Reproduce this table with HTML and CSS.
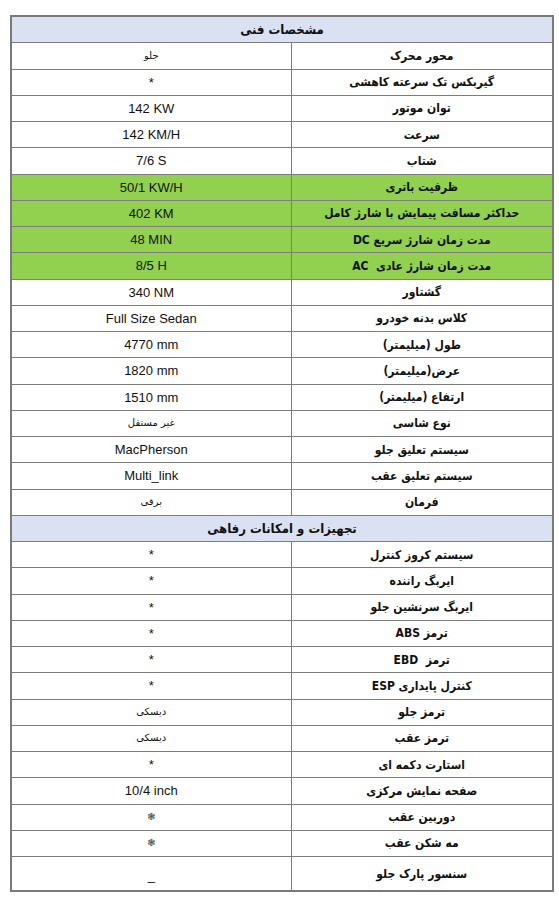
FILE: index.html
```html
<!DOCTYPE html>
<html lang="fa" dir="rtl">
<head>
<meta charset="utf-8">
<title>مشخصات فنی</title>
<link rel="stylesheet" href="styles.css">
</head>
<body>
<table class="spec">
  <colgroup><col class="c-label"><col class="c-value"></colgroup>
  <tbody>
    <tr class="head"><td colspan="2">مشخصات فنی</td></tr>
    <tr><td class="lbl">محور محرک</td><td class="val fa">جلو</td></tr>
    <tr><td class="lbl">گیربکس تک سرعته کاهشی</td><td class="val">*</td></tr>
    <tr><td class="lbl">توان موتور</td><td class="val">142 KW</td></tr>
    <tr><td class="lbl">سرعت</td><td class="val">142 KM/H</td></tr>
    <tr><td class="lbl">شتاب</td><td class="val">7/6 S</td></tr>
    <tr class="green"><td class="lbl">ظرفیت باتری</td><td class="val">50/1 KW/H</td></tr>
    <tr class="green"><td class="lbl">حداکثر مسافت پیمایش با شارژ کامل</td><td class="val">402 KM</td></tr>
    <tr class="green"><td class="lbl">مدت زمان شارژ سریع DC</td><td class="val">48 MIN</td></tr>
    <tr class="green"><td class="lbl">مدت زمان شارژ عادی&nbsp; AC</td><td class="val">8/5 H</td></tr>
    <tr><td class="lbl">گشتاور</td><td class="val">340 NM</td></tr>
    <tr><td class="lbl">کلاس بدنه خودرو</td><td class="val">Full Size Sedan</td></tr>
    <tr><td class="lbl">طول (میلیمتر)</td><td class="val">4770 mm</td></tr>
    <tr><td class="lbl">عرض(میلیمتر)</td><td class="val">1820 mm</td></tr>
    <tr><td class="lbl">ارتفاع (میلیمتر)</td><td class="val">1510 mm</td></tr>
    <tr><td class="lbl">نوع شاسی</td><td class="val fa">غیر مستقل</td></tr>
    <tr><td class="lbl">سیستم تعلیق جلو</td><td class="val">MacPherson</td></tr>
    <tr><td class="lbl">سیستم تعلیق عقب</td><td class="val">Multi_link</td></tr>
    <tr><td class="lbl">فرمان</td><td class="val fa">برقی</td></tr>
    <tr class="head"><td colspan="2">تجهیزات و امکانات رفاهی</td></tr>
    <tr><td class="lbl">سیستم کروز کنترل</td><td class="val">*</td></tr>
    <tr><td class="lbl">ایربگ راننده</td><td class="val">*</td></tr>
    <tr><td class="lbl">ایربگ سرنشین جلو</td><td class="val">*</td></tr>
    <tr><td class="lbl">ترمز ABS</td><td class="val">*</td></tr>
    <tr><td class="lbl">ترمز&nbsp; EBD</td><td class="val">*</td></tr>
    <tr><td class="lbl">کنترل پایداری ESP</td><td class="val">*</td></tr>
    <tr><td class="lbl">ترمز جلو</td><td class="val fa">دیسکی</td></tr>
    <tr><td class="lbl">ترمز عقب</td><td class="val fa">دیسکی</td></tr>
    <tr><td class="lbl">استارت دکمه ای</td><td class="val">*</td></tr>
    <tr><td class="lbl">صفحه نمایش مرکزی</td><td class="val">10/4 inch</td></tr>
    <tr><td class="lbl">دوربین عقب</td><td class="val sym">&#x2743;</td></tr>
    <tr><td class="lbl">مه شکن عقب</td><td class="val sym">&#x2743;</td></tr>
    <tr><td class="lbl">سنسور پارک جلو</td><td class="val low">_</td></tr>
  </tbody>
</table>
</body>
</html>
```

FILE: styles.css
```css
html, body {
  margin: 0;
  padding: 0;
  background: #ffffff;
}

body {
  padding: 15px 5px 0 12px;
  font-family: "DejaVu Sans Condensed", "DejaVu Sans", sans-serif;
  color: #111111;
}

.spec {
  width: 542px;
  border-collapse: collapse;
  border: 2px solid #7a7a7a;
  table-layout: fixed;
}

.c-label { width: 262px; }
.c-value { width: 280px; }

.spec td {
  height: 25.25px;
  padding: 0;
  border: 1px solid #7d7d7d;
  text-align: center;
  vertical-align: middle;
  line-height: 1;
}

.head td {
  background: #d9e1f2;
  font-weight: bold;
  font-size: 13px;
}

.green td {
  background: #92d050;
}

.lbl {
  font-weight: bold;
  font-size: 12px;
}

.val {
  direction: ltr;
  font-family: "Liberation Sans", "DejaVu Sans", sans-serif;
  font-size: 13px;
}

.val.fa {
  direction: rtl;
  font-family: "DejaVu Sans", sans-serif;
  font-size: 10px;
}

.val.sym {
  font-size: 10px;
  color: #555555;
}

.val.low {
  vertical-align: bottom;
  padding-bottom: 8px;
}
```
